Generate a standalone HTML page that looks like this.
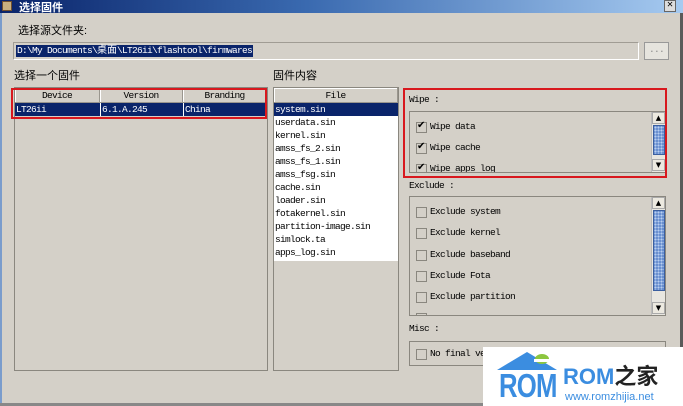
<!DOCTYPE html>
<html><head><meta charset="utf-8"><style>
*{margin:0;padding:0;box-sizing:border-box}
body{width:683px;height:406px;overflow:hidden;background:#d4d0c8;position:relative;font-family:"Liberation Mono","Noto Sans CJK SC",monospace;font-size:9.5px;letter-spacing:-0.7px;color:#000}
.a{position:absolute}
.cn{font-family:"Liberation Sans","Noto Sans CJK SC",sans-serif;font-size:11px;letter-spacing:0}
.sunk{border:1px solid #a09c94;border-right-color:#fff;border-bottom-color:#fff}
.box{border:1px solid #8a877f}
.th{position:absolute;top:0;height:15px;background:#d4d0c8;border-right:1px solid #9a968e;border-bottom:1px solid #9a968e;text-align:center;line-height:15px;box-shadow:inset 1px 1px 0 #fff}
.row{position:absolute;left:0;height:13px;line-height:13px;padding-left:1px;white-space:pre}
.cb{position:absolute;width:11px;height:11px;border:1px solid #8a877f;background:#d4d0c8}
.cb.on::after{content:"✔";position:absolute;left:0;top:-3px;font-size:10px;font-family:"DejaVu Sans",sans-serif}
.lab{position:absolute;white-space:pre}
.sb{position:absolute;width:14px;background:#e8e6e0;border-left:1px solid #bbb}
.ar{position:absolute;left:0;width:13px;height:12px;background:#ece9e0;border:1px solid #aaa;font-size:7px;text-align:center;line-height:10px;font-family:"DejaVu Sans",sans-serif;letter-spacing:0}
.th2{position:absolute;left:1px;width:12px;background:#6a90d0;border:1px solid #3b5fa0;background-image:radial-gradient(#b8cef0 1px,transparent 1px);background-size:3px 3px}
.red{position:absolute;border:2px solid #d8181e}
</style></head><body>
<div class="a" style="left:0;top:0;width:683px;height:13px;background:linear-gradient(90deg,#0a246a,#3a6ab0 45%,#a6caf0)"></div>
<div class="a" style="left:2px;top:1px;width:10px;height:10px;background:#c8b080;border:1px solid #705030"></div>
<div class="a cn" style="left:19px;top:-1px;color:#fff;font-weight:bold;font-size:11px">选择固件</div>
<div class="a" style="left:664px;top:0;width:12px;height:12px;background:#ddd;border:1px solid #666;font-size:10px;line-height:10px;text-align:center;font-weight:bold;letter-spacing:0">✕</div>
<div class="a" style="left:680px;top:13px;width:3px;height:393px;background:#5a5a5a"></div>
<div class="a" style="left:0;top:13px;width:2px;height:393px;background:#7a9ccc"></div>
<div class="a" style="left:0;top:403px;width:683px;height:3px;background:#888"></div>

<div class="a cn" style="left:18px;top:22px">选择源文件夹:</div>
<div class="a sunk" style="left:13px;top:42px;width:626px;height:18px"></div>
<div class="a" style="left:16px;top:45px;height:12px;line-height:12px;background:#0a246a;color:#fff;padding:0 1px;white-space:pre">D:\My Documents\<span class="cn" style="font-size:10px">桌面</span>\LT26ii\flashtool\firmwares</div>
<div class="a" style="left:644px;top:42px;width:25px;height:18px;border:1px solid #999;background:#e6e4de;text-align:center;line-height:14px;color:#888">...</div>

<div class="a cn" style="left:14px;top:67px">选择一个固件</div>
<div class="a cn" style="left:273px;top:67px">固件内容</div>

<div class="a box" style="left:14px;top:87px;width:254px;height:284px">
<div class="th" style="left:0;width:85px">Device</div>
<div class="th" style="left:85px;width:83px">Version</div>
<div class="th" style="left:168px;width:84px">Branding</div>
<div class="row" style="top:15px;width:252px;background:#0a246a;color:#fff">LT26ii</div>
<div class="row" style="top:15px;left:85px;color:#fff;border-left:1px solid #fff">6.1.A.245</div>
<div class="row" style="top:15px;left:168px;color:#fff;border-left:1px solid #fff">China</div>
</div>
<div class="red" style="left:11px;top:88px;width:256px;height:31px"></div>

<div class="a box" style="left:273px;top:87px;width:126px;height:284px">
<div class="th" style="left:0;width:124px">File</div>
<div class="a" style="left:0;top:15px;width:124px;height:158px;background:#fff"></div>
<div class="row" style="top:15px;width:124px;background:#0a246a;color:#fff">system.sin</div>
<div class="row" style="top:28px">userdata.sin</div>
<div class="row" style="top:41px">kernel.sin</div>
<div class="row" style="top:54px">amss_fs_2.sin</div>
<div class="row" style="top:67px">amss_fs_1.sin</div>
<div class="row" style="top:80px">amss_fsg.sin</div>
<div class="row" style="top:93px">cache.sin</div>
<div class="row" style="top:106px">loader.sin</div>
<div class="row" style="top:119px">fotakernel.sin</div>
<div class="row" style="top:132px">partition-image.sin</div>
<div class="row" style="top:145px">simlock.ta</div>
<div class="row" style="top:158px">apps_log.sin</div>
</div>

<div class="lab" style="left:409px;top:94px">Wipe :</div>
<div class="a box" style="left:409px;top:111px;width:257px;height:62px;overflow:hidden">
<div class="cb on" style="left:6px;top:10px"></div><div class="lab" style="left:20px;top:9px">Wipe data</div>
<div class="cb on" style="left:6px;top:31px"></div><div class="lab" style="left:20px;top:30px">Wipe cache</div>
<div class="cb on" style="left:6px;top:52px"></div><div class="lab" style="left:20px;top:51px">Wipe apps log</div>
<div class="sb" style="left:241px;top:0;height:60px"><div class="ar" style="top:0">▲</div><div class="th2" style="top:13px;height:30px"></div><div class="ar" style="top:47px">▼</div></div>
</div>
<div class="red" style="left:403px;top:88px;width:264px;height:90px"></div>

<div class="lab" style="left:409px;top:180px">Exclude :</div>
<div class="a box" style="left:409px;top:196px;width:257px;height:120px;overflow:hidden">
<div class="cb" style="left:6px;top:10px"></div><div class="lab" style="left:20px;top:9px">Exclude system</div>
<div class="cb" style="left:6px;top:31px"></div><div class="lab" style="left:20px;top:30px">Exclude kernel</div>
<div class="cb" style="left:6px;top:53px"></div><div class="lab" style="left:20px;top:52px">Exclude baseband</div>
<div class="cb" style="left:6px;top:74px"></div><div class="lab" style="left:20px;top:73px">Exclude Fota</div>
<div class="cb" style="left:6px;top:95px"></div><div class="lab" style="left:20px;top:94px">Exclude partition</div>
<div class="cb" style="left:6px;top:116px"></div>
<div class="sb" style="left:241px;top:0;height:118px"><div class="ar" style="top:0">▲</div><div class="th2" style="top:13px;height:81px"></div><div class="ar" style="top:105px">▼</div></div>
</div>

<div class="lab" style="left:409px;top:323px">Misc :</div>
<div class="a box" style="left:409px;top:341px;width:257px;height:25px">
<div class="cb" style="left:6px;top:7px"></div><div class="lab" style="left:20px;top:6px">No final verification</div>
</div>

<div class="a" style="left:483px;top:347px;width:200px;height:59px;background:#fff"></div>
<svg class="a" style="left:483px;top:347px" width="200" height="59" viewBox="0 0 200 59">
<path d="M44 5 L14 23 L74 23 Z" fill="#3b8de0"/>
<ellipse cx="59" cy="12" rx="7" ry="5" fill="#8cc63f"/>
<rect x="51" y="12" width="16" height="3" fill="#fff"/>
</svg>
<div class="a" style="left:499px;top:369px;font-family:'Liberation Sans',sans-serif;font-weight:bold;font-size:33px;color:#3b8de0;letter-spacing:-1px;line-height:34px;transform:scaleX(0.78);transform-origin:left">ROM</div>
<div class="a" style="left:563px;top:362px;font-family:'Liberation Sans','Noto Sans CJK SC',sans-serif;font-weight:bold;font-size:22px;line-height:30px;white-space:nowrap;letter-spacing:0"><span style="color:#3b8de0">ROM</span><span style="color:#222">之家</span></div>
<div class="a" style="left:565px;top:391px;font-family:'Liberation Sans',sans-serif;font-size:11px;letter-spacing:0;color:#3b8de0;line-height:12px">www.romzhijia.net</div>
</body></html>
